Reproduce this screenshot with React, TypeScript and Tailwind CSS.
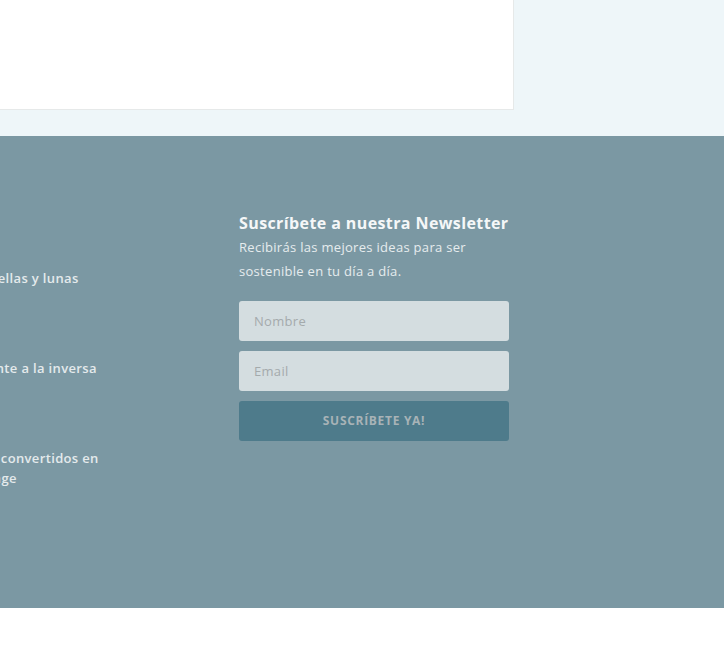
import React from 'react';

const posts = ['Estrellas y lunas', 'Fuente a la inversa', 'CDs convertidos en lounge'];

export default function App() {
  return (
    <div className="w-[724px] min-h-[655px] bg-white font-['Open_Sans',sans-serif]">
      <div className="bg-[#eef6f9] h-[136px]">
        <div className="w-[514px] h-[110px] bg-white border-r border-b border-[#e6e9e9]" />
      </div>

      <footer className="bg-[#7b98a3] h-[472px] flex pt-[75px]">
        <div className="ml-[-28px] w-[140px] flex flex-col gap-[70px] pt-[57px]">
          {posts.map((p) => (
            <a key={p} className="text-[13px] leading-[20px] font-semibold tracking-[0.35px] text-[#e4eaec] block">
              {p}
            </a>
          ))}
        </div>

        <div className="ml-[127px] w-[270px]">
          <h3 className="text-[16px] leading-[24px] font-bold tracking-[0.4px] text-[#f5f7f8] whitespace-nowrap">
            Suscríbete a nuestra Newsletter
          </h3>
          <p className="text-[13px] leading-[24px] tracking-[0.3px] text-[#e6ecee] w-[250px]">
            Recibirás las mejores ideas para ser sostenible en tu día a día.
          </p>
          <form className="mt-[18px] flex flex-col gap-[10px]">
            <input
              placeholder="Nombre"
              className="h-[40px] rounded-[3px] bg-[#d4dde0] px-[15px] text-[13px] tracking-[0.3px] placeholder:text-[#a4aaac] outline-none"
            />
            <input
              placeholder="Email"
              className="h-[40px] rounded-[3px] bg-[#d4dde0] px-[15px] text-[13px] tracking-[0.3px] placeholder:text-[#a4aaac] outline-none"
            />
            <button
              type="button"
              className="h-[40px] rounded-[3px] bg-[#4e7b8b] text-[12px] font-bold uppercase tracking-[0.7px] text-[#a8b3b7]"
            >
              Suscríbete ya!
            </button>
          </form>
        </div>
      </footer>
    </div>
  );
}
